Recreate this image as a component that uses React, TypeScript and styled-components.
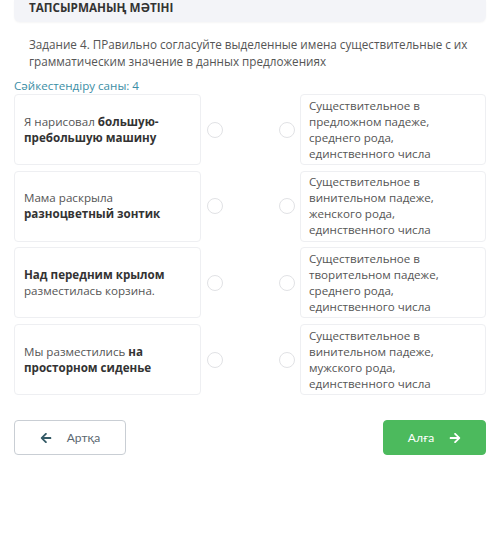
import React from "react";
import styled, { createGlobalStyle } from "styled-components";
import { FaArrowLeft, FaArrowRight } from "react-icons/fa";

const Global = createGlobalStyle`
  html, body { margin: 0; padding: 0; background: #fff; }
  body { font-family: "Open Sans", "Noto Sans", sans-serif; }
`;

const Page = styled.div`
  width: 500px;
  height: 553px;
  padding: 0 14px;
  box-sizing: border-box;
  display: flex;
  flex-direction: column;
`;

const Header = styled.div`
  height: 22px;
  background: #f3f4f8;
  border-radius: 0 0 6px 6px;
  box-shadow: 0 1px 2px rgba(0,0,0,0.04);
  padding: 0 15px;
  display: flex;
  align-items: flex-start;
  font-weight: 700;
  font-size: 11.7px;
  line-height: 15px;
  color: #333;
`;

const Task = styled.p`
  margin: 14px 0 0;
  padding: 0 15px;
  font-size: 11.7px;
  line-height: 16.5px;
  color: #555;
`;

const Count = styled.div`
  margin-top: 9px;
  font-size: 11.6px;
  line-height: 16px;
  color: #3b8ea5;
`;

const Grid = styled.div`
  display: grid;
  grid-template-columns: 187px 1fr 1fr 186px;
  grid-auto-rows: 71px;
  row-gap: 5.7px;
  margin-top: 0;
`;

const Card = styled.div<{ $right?: boolean }>`
  border: 1px solid #eeeff2;
  border-radius: 4px;
  box-sizing: border-box;
  display: flex;
  align-items: center;
  font-size: 11.6px;
  line-height: 16px;
  color: #555;
  padding: ${(p) => (p.$right ? "0 8px" : "0 9px")};
  b { color: #333; font-weight: 700; }
`;

const RadioCell = styled.div<{ $align: "left" | "right" }>`
  display: flex;
  align-items: center;
  justify-content: ${(p) => (p.$align === "left" ? "flex-start" : "flex-end")};
  padding: ${(p) => (p.$align === "left" ? "0 0 0 6px" : "0 5px 0 0")};
`;

const Radio = styled.span`
  width: 16px;
  height: 16px;
  border-radius: 50%;
  border: 1.5px solid #e1e2e5;
  box-sizing: border-box;
  background: #fff;
`;

const Footer = styled.div`
  display: flex;
  justify-content: space-between;
  margin-top: 25px;
`;

const Button = styled.button<{ $primary?: boolean }>`
  height: 35px;
  box-sizing: border-box;
  border-radius: 4px;
  display: flex;
  align-items: center;
  justify-content: center;
  gap: 15px;
  font-family: Lato, "Open Sans", sans-serif;
  font-size: 12px;
  cursor: pointer;
  width: ${(p) => (p.$primary ? "103px" : "112px")};
  border: 1px solid ${(p) => (p.$primary ? "#4cba5d" : "#c9ced4")};
  background: ${(p) => (p.$primary ? "#4cba5d" : "#fff")};
  color: ${(p) => (p.$primary ? "#fff" : "#5b6770")};
  svg { color: ${(p) => (p.$primary ? "#fff" : "#345a66")}; font-size: 12px; }
`;

const rows: { left: React.ReactNode; right: string }[] = [
  {
    left: (
      <span>
        Я нарисовал <b>большую-пребольшую машину</b>
      </span>
    ),
    right: "Существительное в предложном падеже, среднего рода, единственного числа",
  },
  {
    left: (
      <span>
        Мама раскрыла <b>разноцветный зонтик</b>
      </span>
    ),
    right: "Существительное в винительном падеже, женского рода, единственного числа",
  },
  {
    left: (
      <span>
        <b>Над передним крылом</b> разместилась корзина.
      </span>
    ),
    right: "Существительное в творительном падеже, среднего рода, единственного числа",
  },
  {
    left: (
      <span>
        Мы разместились <b>на просторном сиденье</b>
      </span>
    ),
    right: "Существительное в винительном падеже, мужского рода, единственного числа",
  },
];

export default function App() {
  return (
    <>
      <Global />
      <Page>
        <Header>ТАПСЫРМАНЫҢ МӘТІНІ</Header>
        <Task>
          Задание 4. ПРавильно согласуйте выделенные имена существительные с их
          грамматическим значение в данных предложениях
        </Task>
        <Count>Сәйкестендіру саны: 4</Count>
        <Grid>
          {rows.map((r, i) => (
            <React.Fragment key={i}>
              <Card>{r.left}</Card>
              <RadioCell $align="left">
                <Radio />
              </RadioCell>
              <RadioCell $align="right">
                <Radio />
              </RadioCell>
              <Card $right>{r.right}</Card>
            </React.Fragment>
          ))}
        </Grid>
        <Footer>
          <Button>
            <FaArrowLeft />
            Артқа
          </Button>
          <Button $primary>
            Алға
            <FaArrowRight />
          </Button>
        </Footer>
      </Page>
    </>
  );
}
